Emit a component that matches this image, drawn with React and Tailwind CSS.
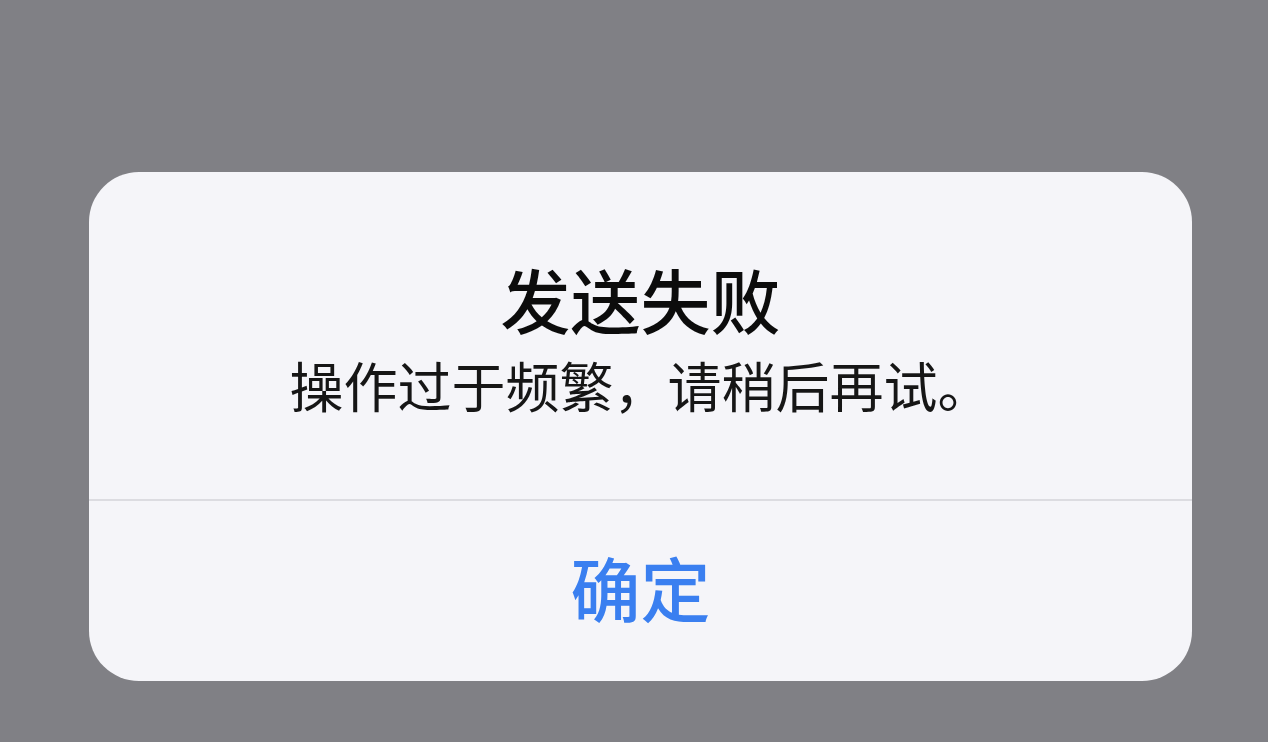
export default function App() {
  return (
    <div
      className="w-full h-[742px] bg-[#808085] overflow-hidden"
      style={{ fontFamily: '"Noto Sans CJK SC", "Noto Sans", sans-serif' }}
    >
      <div className="pt-[172px] pl-[89px]">
        <div className="w-[1103px] h-[509px] bg-[#f5f5f9] rounded-[50px] flex flex-col overflow-hidden">
          <div className="h-[329px] flex flex-col items-center pt-[93px] border-b-2 border-[#dcdce1]">
            <div className="text-[70px] leading-[68px] font-medium text-[#0c0c0c]">发送失败</div>
            <div className="mt-[26px] text-[54px] leading-[52px] font-normal text-[#161616]">
              操作过于频繁，请稍后再试。
            </div>
          </div>
          <div className="flex-1 flex items-center justify-center pb-[8px]">
            <div className="text-[70px] leading-[70px] font-medium text-[#3a7ff0]">确定</div>
          </div>
        </div>
      </div>
    </div>
  );
}
